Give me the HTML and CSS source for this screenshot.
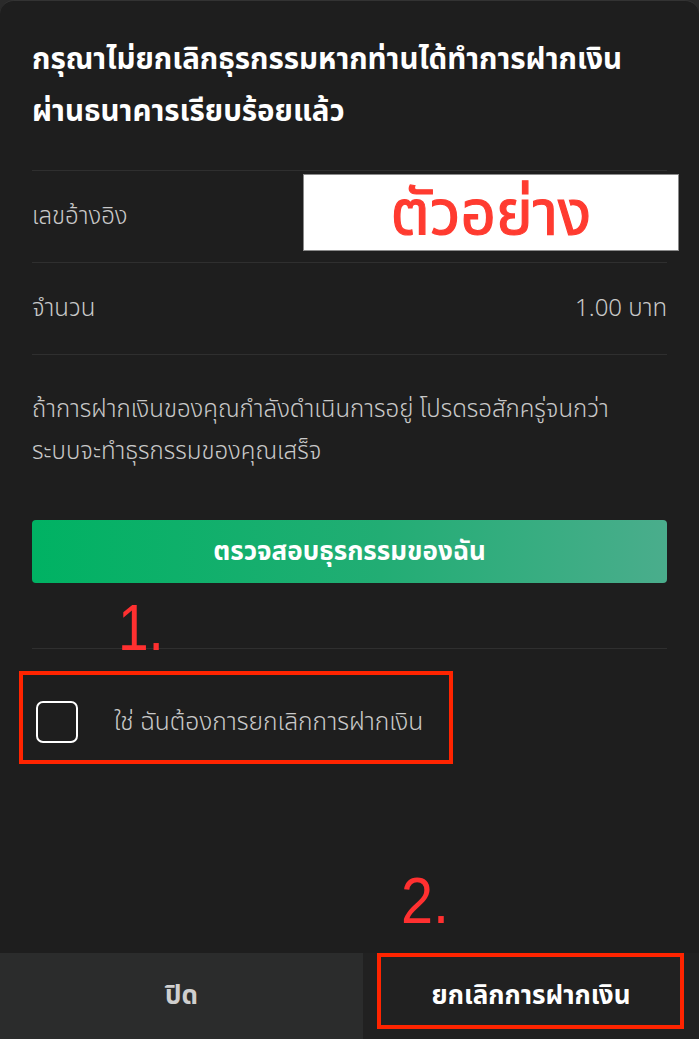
FILE: index.html
```html
<!DOCTYPE html>
<html lang="th">
<head>
<meta charset="utf-8">
<link rel="stylesheet" href="styles.css">
</head>
<body>
<div class="sheet">
  <div class="content">
    <h1 class="title">กรุณาไม่ยกเลิกธุรกรรมหากท่านได้ทำการฝากเงิน<br>ผ่านธนาคารเรียบร้อยแล้ว</h1>
    <div class="rows">
      <div class="row">
        <span class="label">เลขอ้างอิง</span>
        <span class="value"></span>
        <div class="sample">ตัวอย่าง</div>
      </div>
      <div class="row">
        <span class="label">จำนวน</span>
        <span class="value">1.00 บาท</span>
      </div>
    </div>
    <p class="note">ถ้าการฝากเงินของคุณกำลังดำเนินการอยู่ โปรดรอสักครู่จนกว่า<br>ระบบจะทำธุรกรรมของคุณเสร็จ</p>
    <button class="check-btn">ตรวจสอบธุรกรรมของฉัน</button>
    <div class="confirm">
      <span class="anno anno-1">1.</span>
      <label class="confirm-row">
        <span class="box"></span>
        <span class="confirm-text">ใช่ ฉันต้องการยกเลิกการฝากเงิน</span>
      </label>
      <span class="mark mark-1"></span>
    </div>
  </div>
  <div class="footer">
    <span class="anno anno-2">2.</span>
    <button class="foot-btn close">ปิด</button>
    <button class="foot-btn cancel">ยกเลิกการฝากเงิน<span class="mark mark-2"></span></button>
  </div>
</div>
</body>
</html>
```

FILE: styles.css
```css
* { box-sizing: border-box; }
html, body {
  margin: 0;
  padding: 0;
  background: #2a2a2a;
}
body {
  font-family: "Noto Sans Thai", "Noto Sans", "DejaVu Sans", sans-serif;
}
.sheet {
  width: 699px;
  height: 1039px;
  background: #1e1e1e;
  border-radius: 14px 14px 0 0;
  border-top: 1px solid #333;
  display: flex;
  flex-direction: column;
  position: relative;
  overflow: hidden;
}
.content {
  padding: 33px 32px 0;
  flex: 1;
}
.title {
  margin: 0;
  color: #fff;
  font-weight: 700;
  font-size: 29.5px;
  line-height: 52px;
  white-space: nowrap;
}
.rows {
  margin-top: 32px;
  border-top: 1px solid #2f2f2f;
}
.row {
  height: 92px;
  display: flex;
  align-items: center;
  justify-content: space-between;
  border-bottom: 1px solid #2f2f2f;
  color: #c9c9c9;
  font-size: 24px;
  font-weight: 300;
  position: relative;
}
.sample {
  position: absolute;
  left: 271px;
  top: 3px;
  width: 376px;
  height: 77px;
  background: #fff;
  border: 1px solid #8a8a8a;
  color: #ff3b30;
  font-size: 62px;
  font-weight: 400;
  -webkit-text-stroke: 1.2px #ff3b30;
  display: flex;
  align-items: center;
  justify-content: center;
  line-height: 1;
  padding-top: 4px;
}
.note {
  margin: 34px 0 0;
  color: #c9c9c9;
  font-size: 24px;
  font-weight: 300;
  line-height: 42px;
  white-space: nowrap;
}
.check-btn {
  display: block;
  width: 100%;
  height: 63px;
  margin-top: 47px;
  border: 0;
  border-radius: 4px;
  background: linear-gradient(90deg, #00b263 0%, #22ad74 55%, #4aad8c 100%);
  color: #fff;
  font-family: inherit;
  font-weight: 700;
  font-size: 26px;
}
.confirm {
  margin-top: 65px;
  border-top: 1px solid #2f2f2f;
  position: relative;
}
.confirm-row {
  display: flex;
  align-items: center;
  gap: 36px;
  padding: 52px 0 0 4px;
}
.box {
  width: 42px;
  height: 42px;
  border: 2px solid #fff;
  border-radius: 7px;
  flex: none;
}
.confirm-text {
  color: #c9c9c9;
  font-size: 24.6px;
  font-weight: 300;
}
.anno {
  position: absolute;
  color: #ff3030;
  font-family: "Liberation Sans", sans-serif;
  font-size: 64px;
  line-height: 1;
  transform-origin: left top;
}
.anno-1 { left: 86px; top: -53px; transform: scaleX(0.86); }
.anno-2 { left: 401px; top: -84px; transform: scaleX(0.9); }
.mark {
  position: absolute;
  border: 4px solid #ff2400;
  pointer-events: none;
}
.mark-1 {
  left: -13px;
  top: 22px;
  width: 434px;
  height: 93px;
}
.mark-2 {
  left: 14px;
  top: 0;
  width: 307px;
  height: 76px;
}
.footer {
  height: 86px;
  display: flex;
  position: relative;
}
.foot-btn {
  border: 0;
  height: 100%;
  font-family: inherit;
  font-weight: 700;
  font-size: 26px;
  position: relative;
}
.close {
  width: 363px;
  background: #2b2c2c;
  color: #cfcfcf;
}
.cancel {
  flex: 1;
  background: #212121;
  color: #fff;
}
```
